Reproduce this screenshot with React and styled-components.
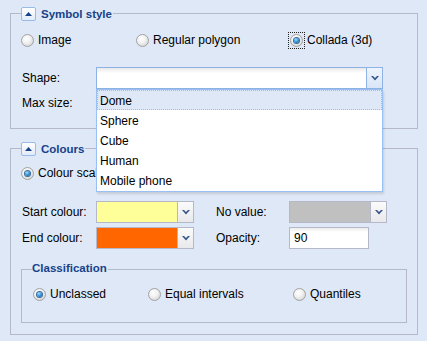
import React from 'react';
import styled, { createGlobalStyle } from 'styled-components';

const Global = createGlobalStyle`
  html, body { margin: 0; padding: 0; background: #dfe8f6; }
  body { font-family: "Liberation Sans", Arial, sans-serif; font-size: 12px; color: #000; }
  #root { width: 427px; height: 341px; overflow: hidden; }
`;

const Page = styled.div`
  padding: 5px 0 0 10px;
  display: flex;
  flex-direction: column;
  gap: 11px;
`;

const FieldSet = styled.fieldset`
  margin: 0;
  min-width: 0;
  box-sizing: border-box;
  width: ${p => p.$w}px;
  border: 1px solid #b5b8c8;
  padding: ${p => p.$pad};
  display: flex;
  flex-direction: column;
`;

const Legend = styled.legend`
  padding: 0 1px 0 0;
  margin: 0;
  height: ${p => p.$h}px;
  font-size: 11.5px;
  font-weight: bold;
  color: #15428b;
`;

const LegendInner = styled.span`
  display: inline-flex;
  align-items: center;
  gap: 5px;
  height: 100%;
`;

const ToggleBtn = styled.span`
  width: 15px;
  height: 14px;
  box-sizing: border-box;
  border: 1px solid #99bbe8;
  border-radius: 2px;
  background: linear-gradient(#ffffff, #e2ebf8);
  display: inline-flex;
  align-items: center;
  justify-content: center;
`;

const RadioRow = styled.div`
  display: grid;
  grid-template-columns: ${p => p.$cols};
  height: 18px;
  align-items: center;
  margin-top: ${p => p.$mt || 0}px;
  padding-left: ${p => p.$pl || 0}px;
`;

const RadioItem = styled.label`
  display: flex;
  align-items: center;
  gap: 4px;
  white-space: nowrap;
`;

const RadioFocus = styled.span`
  display: flex;
  width: 13px;
  height: 13px;
  flex: none;
  outline: ${p => (p.$focus ? '1px dotted #222' : 'none')};
  outline-offset: 1px;
`;

const RadioMark = styled.span`
  width: 13px;
  height: 13px;
  box-sizing: border-box;
  border-radius: 50%;
  border: 1px solid #a2a2a2;
  background: radial-gradient(circle at 40% 35%, #ffffff 0%, #f2f2f2 40%, #c9c9c9 100%);
  display: flex;
  align-items: center;
  justify-content: center;
  &::after {
    content: '';
    display: ${p => (p.$checked ? 'block' : 'none')};
    width: 5px;
    height: 5px;
    border-radius: 50%;
    background: radial-gradient(circle at 40% 35%, #a6ddff 0%, #2f93dc 50%, #0b3f70 100%);
    box-shadow: 0 0 0 1px #3a6c9c;
  }
`;

const FormRow = styled.div`
  display: grid;
  grid-template-columns: 75px auto;
  align-items: center;
  height: 22px;
  margin-top: ${p => p.$mt || 0}px;
`;

const Label = styled.span`
  padding-left: 1px;
  white-space: nowrap;
`;

const ComboWrap = styled.div`
  position: relative;
  display: flex;
  width: ${p => p.$w}px;
  height: 22px;
`;

const ComboInput = styled.div`
  flex: 1;
  box-sizing: border-box;
  height: 22px;
  border: 1px solid ${p => (p.$focus ? '#8db2e3' : '#b5b8c8')};
  border-right: none;
  background: linear-gradient(#e8e8e8 0, #ffffff 5px);
`;

const Swatch = styled.div`
  width: 81px;
  box-sizing: border-box;
  height: 22px;
  border: 1px solid #b5b8c8;
  border-right: none;
  background: ${p => p.$color};
`;

const Trigger = styled.div`
  width: 17px;
  height: 22px;
  box-sizing: border-box;
  border: 1px solid ${p => (p.$focus ? '#8db2e3' : '#b5b8c8')};
  background: ${p => (p.$focus ? 'linear-gradient(#eef4fc, #d9e6f7)' : 'linear-gradient(#fbfbfb, #e9e9ec)')};
  display: flex;
  align-items: center;
  justify-content: center;
`;

const TextInput = styled.div`
  width: ${p => p.$w}px;
  height: 22px;
  box-sizing: border-box;
  border: 1px solid #b5b8c8;
  background: linear-gradient(#ebebeb 0, #ffffff 4px);
  padding: 0 4px;
  display: flex;
  align-items: center;
`;

const DropList = styled.ul`
  position: absolute;
  top: 100%;
  left: 0;
  width: 100%;
  box-sizing: border-box;
  margin: 0;
  padding: 0 0 1px;
  list-style: none;
  background: #fff;
  border: 1px solid #98c0f4;
  box-shadow: 1px 2px 2px rgba(0, 0, 0, 0.12);
  z-index: 10;
`;

const DropItem = styled.li`
  height: 20px;
  box-sizing: border-box;
  padding: 1px 2px 0;
  border: 1px dotted ${p => (p.$sel ? '#a3bae9' : 'transparent')};
  background: ${p => (p.$sel ? '#dfe8f6' : '#fff')};
  display: flex;
  align-items: center;
  white-space: nowrap;
`;

const ColourGrid = styled.div`
  display: grid;
  grid-template-columns: 75px 119px 74px auto;
  grid-auto-rows: 22px;
  row-gap: 4px;
  align-items: center;
  margin-top: ${p => p.$mt || 0}px;
`;

const SubSet = styled(FieldSet)`
  margin-top: 13px;
`;

const Chevron = () => (
  <svg width="8" height="5" viewBox="0 0 8 5">
    <path d="M0 0 H2 L4 2 L6 0 H8 L4 4.5 Z" fill="#34548c" />
  </svg>
);

const UpArrow = () => (
  <svg width="7" height="4" viewBox="0 0 7 4">
    <path d="M0 4 L3.5 0 L7 4 Z" fill="#15428b" />
  </svg>
);

const Radio = ({ label, checked, focus }) => (
  <RadioItem>
    <RadioFocus $focus={focus}>
      <RadioMark $checked={checked} />
    </RadioFocus>
    <span>{label}</span>
  </RadioItem>
);

const ColourCombo = ({ color }) => (
  <ComboWrap $w={98}>
    <Swatch $color={color} />
    <Trigger>
      <Chevron />
    </Trigger>
  </ComboWrap>
);

const shapes = ['Dome', 'Sphere', 'Cube', 'Human', 'Mobile phone'];

export default function App() {
  return (
    <>
      <Global />
      <Page>
        <FieldSet $w={408} $pad="9px 10px 14px 10px">
          <Legend $h={17}>
            <LegendInner>
              <ToggleBtn>
                <UpArrow />
              </ToggleBtn>
              Symbol style
            </LegendInner>
          </Legend>
          <RadioRow $cols="115px 154px auto">
            <Radio label="Image" />
            <Radio label="Regular polygon" />
            <Radio label="Collada (3d)" checked focus />
          </RadioRow>
          <FormRow $mt={18}>
            <Label>Shape:</Label>
            <ComboWrap $w={287}>
              <ComboInput $focus />
              <Trigger $focus>
                <Chevron />
              </Trigger>
              <DropList>
                {shapes.map((s, i) => (
                  <DropItem key={s} $sel={i === 0}>
                    {s}
                  </DropItem>
                ))}
              </DropList>
            </ComboWrap>
          </FormRow>
          <FormRow $mt={3}>
            <Label>Max size:</Label>
            <TextInput $w={80} />
          </FormRow>
        </FieldSet>

        <FieldSet $w={408} $pad="7px 9px 11px 10px">
          <Legend $h={17}>
            <LegendInner>
              <ToggleBtn>
                <UpArrow />
              </ToggleBtn>
              Colours
            </LegendInner>
          </Legend>
          <RadioRow $cols="auto">
            <Radio label="Colour scale" checked />
          </RadioRow>
          <ColourGrid $mt={19}>
            <Label>Start colour:</Label>
            <ColourCombo color="#ffff99" />
            <Label>No value:</Label>
            <ColourCombo color="#c0c0c0" />
            <Label>End colour:</Label>
            <ColourCombo color="#ff6600" />
            <Label>Opacity:</Label>
            <TextInput $w={80}>90</TextInput>
          </ColourGrid>
          <SubSet $w={386} $pad="8px 10px 19px 10px">
            <Legend $h={15}>Classification</Legend>
            <RadioRow $cols="115px 145px auto" $pl={1}>
              <Radio label="Unclassed" checked />
              <Radio label="Equal intervals" />
              <Radio label="Quantiles" />
            </RadioRow>
          </SubSet>
        </FieldSet>
      </Page>
    </>
  );
}
